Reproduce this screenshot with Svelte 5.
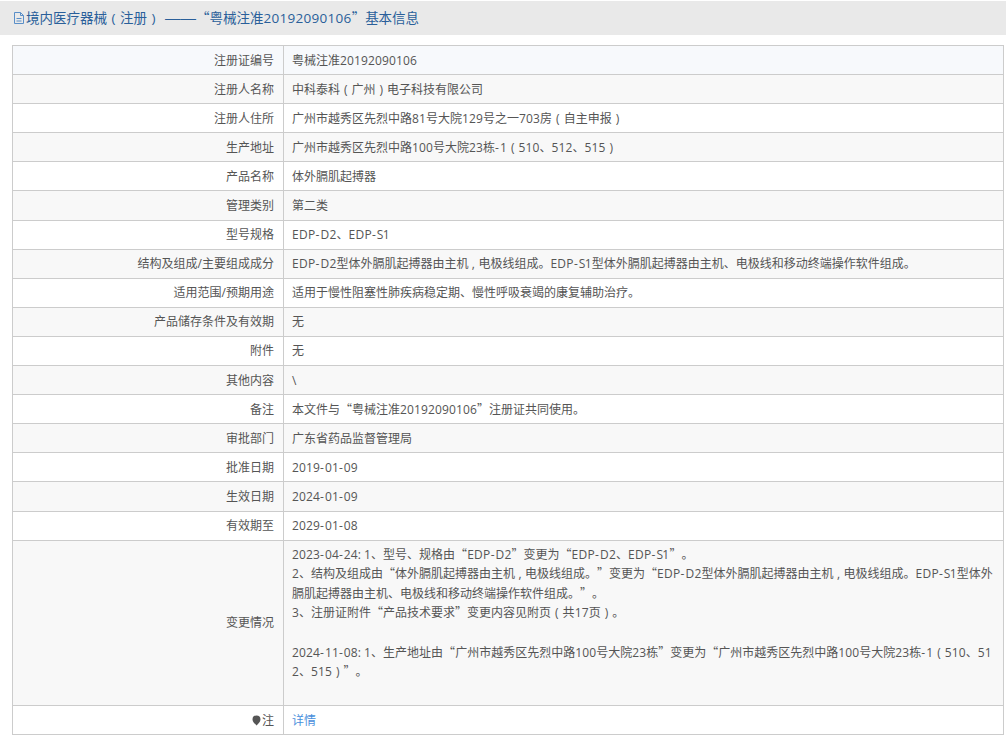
<script>
const rows = [
  ['注册证编号','粤械注准20192090106'],
  ['注册人名称','中科泰科（广州）电子科技有限公司'],
  ['注册人住所','广州市越秀区先烈中路81号大院129号之一703房（自主申报）'],
  ['生产地址','广州市越秀区先烈中路100号大院23栋-1（510、512、515）'],
  ['产品名称','体外膈肌起搏器'],
  ['管理类别','第二类'],
  ['型号规格','EDP-D2、EDP-S1'],
  ['结构及组成/主要组成成分','EDP-D2型体外膈肌起搏器由主机，电极线组成。EDP-S1型体外膈肌起搏器由主机、电极线和移动终端操作软件组成。'],
  ['适用范围/预期用途','适用于慢性阻塞性肺疾病稳定期、慢性呼吸衰竭的康复辅助治疗。'],
  ['产品储存条件及有效期','无'],
  ['附件','无'],
  ['其他内容','\\'],
  ['备注','本文件与“粤械注准20192090106”注册证共同使用。'],
  ['审批部门','广东省药品监督管理局'],
  ['批准日期','2019-01-09'],
  ['生效日期','2024-01-09'],
  ['有效期至','2029-01-08'],
];

const changes = [
  '2023-04-24: 1、型号、规格由“EDP-D2”变更为“EDP-D2、EDP-S1”。',
  '2、结构及组成由“体外膈肌起搏器由主机，电极线组成。”变更为“EDP-D2型体外膈肌起搏器由主机，电极线组成。EDP-S1型体外膈肌起搏器由主机、电极线和移动终端操作软件组成。”。',
  '3、注册证附件“产品技术要求”变更内容见附页（共17页）。',
  '',
  '2024-11-08: 1、生产地址由“广州市越秀区先烈中路100号大院23栋”变更为“广州市越秀区先烈中路100号大院23栋-1（510、512、515）”。',
  '',
];

const title = '境内医疗器械（注册）——“粤械注准20192090106”基本信息';

// Splits text so wide punctuation and Latin runs can be set the way the page sets them.
function tokens(text) {
  const out = [];
  const re = /——|[（），]|[“”]|-|[A-Z]+|[0-9]+|[^（），“”—\-A-Z0-9]+/g;
  for (const m of text.matchAll(re)) {
    const t = m[0];
    if (t === '（') out.push({ t: '(', c: 'slot' });
    else if (t === '）') out.push({ t: ')', c: 'slot' });
    else if (t === '，') out.push({ t: ',', c: 'slot comma' });
    else if (t === '——') out.push({ t, c: 'rule' });
    else if ('“”'.includes(t)) out.push({ t, c: 'cjk' });
    else if (t === '-') out.push({ t, c: 'dash' });
    else if (t === 'S') out.push({ t, c: 'tight' });
    else if (/^[A-Z]/.test(t)) out.push({ t, c: 'caps' });
    else if (/^[0-9]/.test(t)) out.push({ t, c: 'num' });
    else out.push({ t, c: '' });
  }
  return out;
}
</script>

{#snippet rich(text)}{#each tokens(text) as k}<span class={k.c}>{k.t}</span>{/each}{/snippet}

<div class="page">
  <h1 class="title">
    <svg class="doc" viewBox="0 0 12 14" width="12" height="14" aria-hidden="true">
      <path d="M1.5 1.5h6l3 3v8h-9zM7.5 1.5v3h3M3.5 7.5h5M3.5 10h5" fill="none" stroke="#5a8fc8" stroke-width="1"/>
    </svg>{@render rich(title)}
  </h1>
  <table>
    <tbody>
      {#each rows as r}
        <tr>
          <th>{@render rich(r[0])}</th>
          <td>{@render rich(r[1])}</td>
        </tr>
      {/each}
      <tr class="changes">
        <th>变更情况</th>
        <td>{#each changes as line}{@render rich(line)}<br>{/each}</td>
      </tr>
      <tr>
        <th><svg class="pin" viewBox="0 0 9 11" width="9" height="11" aria-hidden="true"><path d="M4.5 0.5a4 4 0 0 1 4 4c0 2.4-2.4 4.2-4 6-1.6-1.8-4-3.6-4-6a4 4 0 0 1 4-4z" fill="#555"/></svg>注</th>
        <td><span class="link">详情</span></td>
      </tr>
    </tbody>
  </table>
</div>

<style>
:global(body) { margin: 0; background: #fff; overflow: hidden; }
.page { height: 735px; overflow: hidden; padding-top: 1px; box-sizing: border-box; font-family: "Open Sans", "Noto Sans CJK SC", sans-serif; text-spacing-trim: space-all; }
.title { margin: 0 0 10px; height: 34px; line-height: 34px; padding-left: 13px; background: #e9e9e9; color: #2a5f9a; font-size: 13.5px; font-weight: 400; white-space: nowrap; }
.title .num { letter-spacing: .3px; }
.doc { vertical-align: -2px; margin-right: 1px; }
table { border-collapse: collapse; margin-left: 12px; width: 992px; table-layout: fixed; font-size: 12px; color: #555; }
tr { height: 29.1px; }
th, td { border: 1px solid #ccc; padding: .5px 8px 0; line-height: 19.6px; font-weight: 400; word-break: break-all; }
th { width: 253px; padding-right: 9px; text-align: right; }
tbody tr:nth-child(even) { background: #f8f8f8; }
tbody tr:first-child { background: #f7f9fc; }
.changes td { padding: 4px 8px; vertical-align: top; }
.slot { display: inline-block; width: .96em; text-align: center; line-height: 1; }
.comma { width: .83em; }
.cjk { font-family: "Noto Sans CJK SC", sans-serif; line-height: 1; }
.rule { font-family: "Liberation Sans", sans-serif; font-size: 15.5px; margin-left: 5px; line-height: 1; }
.dash { letter-spacing: 1px; }
.caps { letter-spacing: .3px; }
.tight { letter-spacing: -.6px; }
.num { letter-spacing: .14px; }
.pin { vertical-align: -1px; margin-right: 1px; }
.link { color: #4a8fdc; }
</style>
